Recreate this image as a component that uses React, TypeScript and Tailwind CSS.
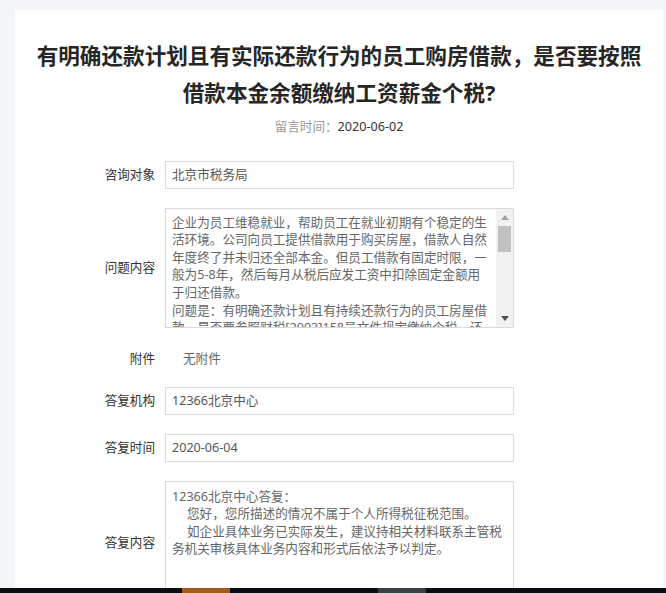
import React from "react";

const FONT = { fontFamily: '"Noto Sans", "Noto Sans CJK SC", sans-serif' };

function Label({ children }: { children: React.ReactNode }) {
  return (
    <div className="w-[80px] shrink-0 text-right text-[#333] mr-[10px]">{children}</div>
  );
}

function InputRow({ label, value, mb }: { label: string; value: string; mb: string }) {
  return (
    <div className={`flex items-center ${mb}`}>
      <Label>{label}</Label>
      <div className="w-[349px] h-[28px] border border-[#dcdcdc] bg-white flex items-center pl-[6px] text-[#555] whitespace-nowrap">
        {value}
      </div>
    </div>
  );
}

function Triangle({ up }: { up: boolean }) {
  return (
    <svg width="8" height="5" viewBox="0 0 8 5">
      {up ? <polygon points="0,5 8,5 4,0" fill="#a3a3a3" /> : <polygon points="0,0 8,0 4,5" fill="#505050" />}
    </svg>
  );
}

export default function App() {
  const q = [
    "企业为员工维稳就业，帮助员工在就业初期有个稳定的生",
    "活环境。公司向员工提供借款用于购买房屋，借款人自然",
    "年度终了并未归还全部本金。但员工借款有固定时限，一",
    "般为5-8年，然后每月从税后应发工资中扣除固定金额用",
    "于归还借款。",
    "问题是：有明确还款计划且有持续还款行为的员工房屋借",
    "款，是否要参照财税[2003]158号文件规定缴纳个税，还",
  ];
  return (
    <div className="h-[593px] w-[666px] bg-[#f4f5f7] flex flex-col overflow-hidden text-[12.6px] leading-[17.6px]" style={FONT}>
      <div className="flex-1 overflow-hidden pt-[10px] pl-[15px] pr-[3px]">
        <div className="bg-white h-full pt-[27px]">
          <h1 className="text-center text-[21.6px] leading-[37px] font-bold text-[#262626]">
            有明确还款计划且有实际还款行为的员工购房借款，是否要按照
            <br />
            借款本金余额缴纳工资薪金个税?
          </h1>
          <div className="text-center mt-[7px]">
            <span className="text-[#999]">留言时间：</span>
            <span className="text-[#333]">2020-06-02</span>
          </div>

          <div className="mt-[25px] pl-[60px]">
            <InputRow label="咨询对象" value="北京市税务局" mb="mb-[19px]" />

            <div className="flex items-center mb-[19px]">
              <Label>问题内容</Label>
              <div className="w-[349px] h-[120px] border border-[#d9d9d9] bg-white flex">
                <div className="flex-1 overflow-hidden pl-[6px] pt-[5px] text-[#666] whitespace-nowrap">
                  {q.map((l, i) => (
                    <div key={i}>{l}</div>
                  ))}
                </div>
                <div className="w-[17px] bg-[#f1f1f1] flex flex-col">
                  <div className="h-[17px] flex items-center justify-center">
                    <Triangle up />
                  </div>
                  <div className="h-[26px] mx-[2px] bg-[#c1c1c1]" />
                  <div className="flex-1" />
                  <div className="h-[17px] flex items-center justify-center">
                    <Triangle up={false} />
                  </div>
                </div>
              </div>
            </div>

            <div className="flex items-center h-[24px] mb-[16px]">
              <Label>附件</Label>
              <div className="ml-[18px] text-[#666]">无附件</div>
            </div>

            <InputRow label="答复机构" value="12366北京中心" mb="mb-[19px]" />
            <InputRow label="答复时间" value="2020-06-04" mb="mb-[19px]" />

            <div className="flex items-center">
              <Label>答复内容</Label>
              <div className="w-[349px] h-[124px] border border-[#d9d9d9] bg-white pl-[6px] pt-[6px] text-[#666] whitespace-nowrap">
                <div>12366北京中心答复：</div>
                <div className="pl-[15px]">您好，您所描述的情况不属于个人所得税征税范围。</div>
                <div className="pl-[15px]">如企业具体业务已实际发生，建议持相关材料联系主管税</div>
                <div>务机关审核具体业务内容和形式后依法予以判定。</div>
              </div>
            </div>
          </div>
        </div>
      </div>
      <div className="h-[5px] bg-[#0a0e14] flex shrink-0">
        <div className="w-[182px]" />
        <div className="w-[48px] bg-[#a35a1f]" />
        <div className="w-[148px]" />
        <div className="w-[48px] bg-[#3b3f46]" />
      </div>
    </div>
  );
}
